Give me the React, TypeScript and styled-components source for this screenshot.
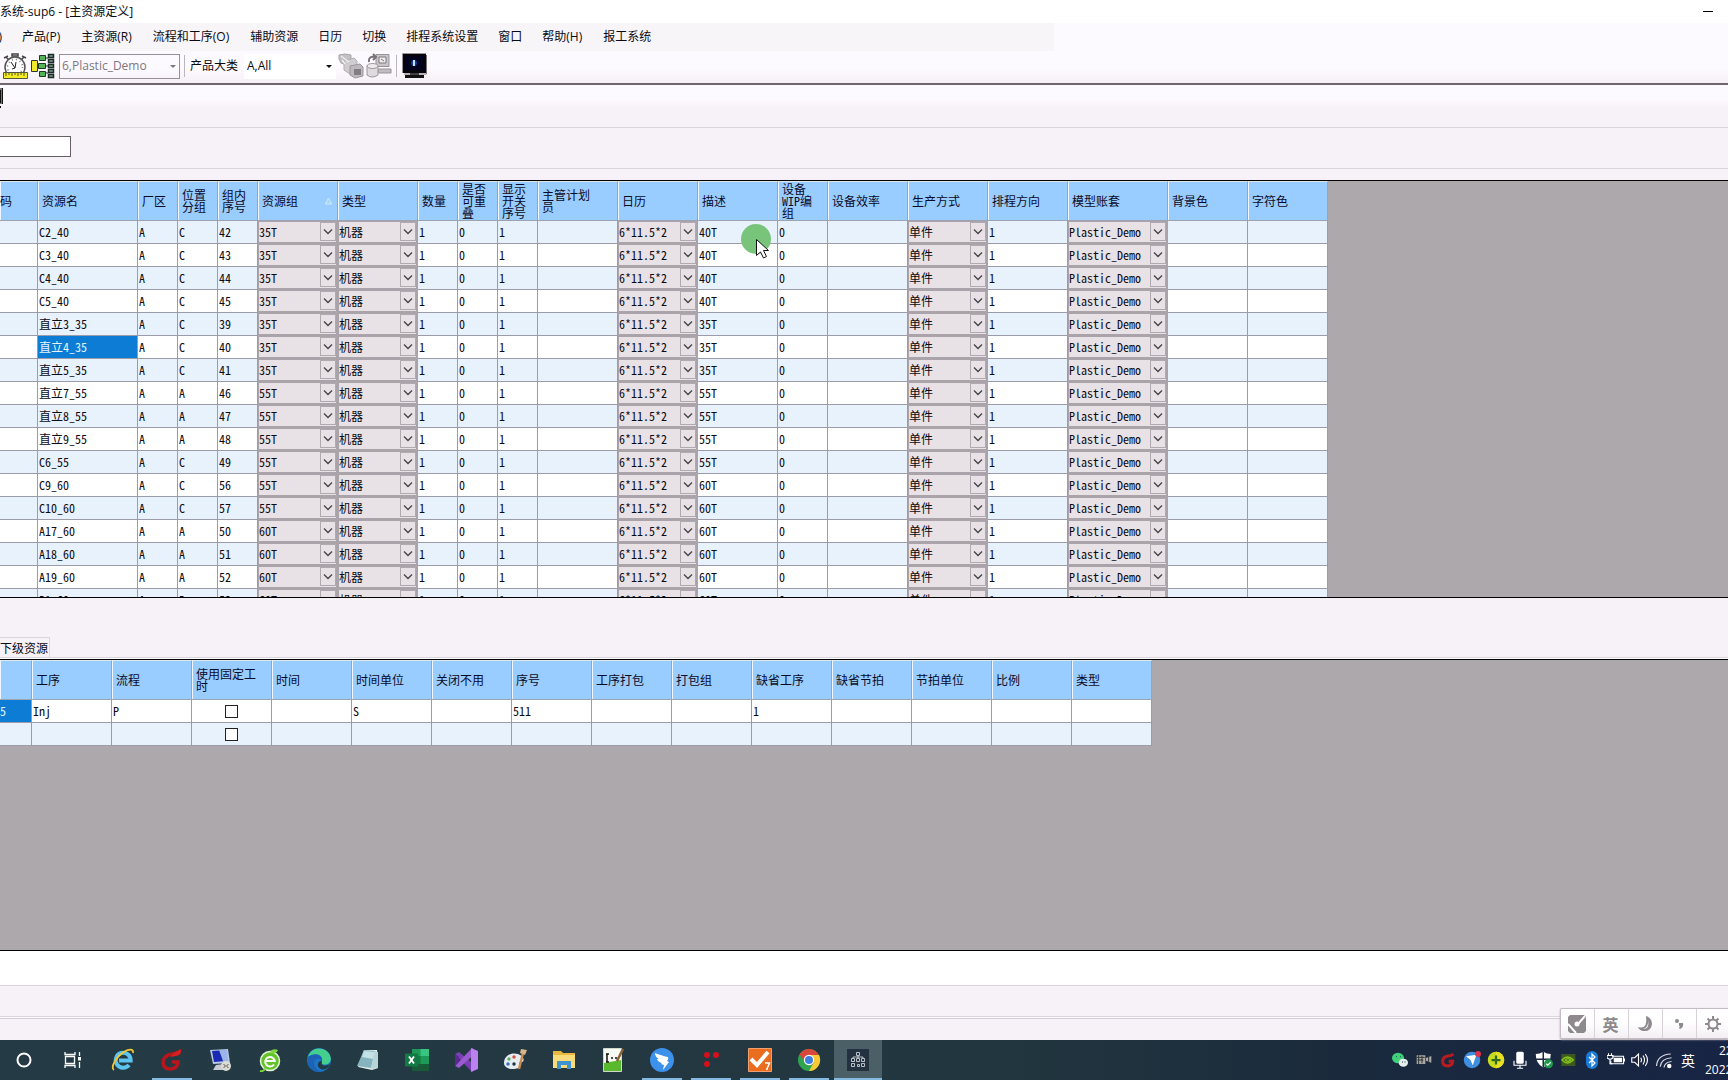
import React from "react";
import styled, { createGlobalStyle, css } from "styled-components";

const GRID_FONT = `"Noto Sans Mono CJK SC", "Noto Sans CJK SC", monospace`;
const UI_FONT = `"Open Sans", "Noto Sans CJK SC", sans-serif`;

const Global = createGlobalStyle`
  * { box-sizing: border-box; }
  body { margin: 0; background: #f7f1f8; }
  button, input, select { font: inherit; color: inherit; margin: 0; padding: 0; border: 0; border-radius: 0; background: none; }
`;

/* ---------- frame ---------- */

const Page = styled.div`
  position: relative;
  display: flex;
  flex-direction: column;
  height: 100vh;
  overflow: hidden;
  background: #f7f1f8;
  color: #0a0a12;
  font: 12px/16px ${UI_FONT};
`;

const TitleBar = styled.header`
  display: flex;
  align-items: center;
  justify-content: space-between;
  height: 23px;
  padding-right: 12px;
  background: #fff;
`;

const Title = styled.h1`
  margin: 0;
  font: inherit;
  white-space: nowrap;
`;

const Minimize = styled.button`
  display: flex;
  align-items: center;
  justify-content: center;
  width: 16px;
  height: 16px;
  &::before {
    content: "";
    width: 10px;
    height: 1px;
    background: #000;
  }
`;

const MenuRow = styled.div`
  background: #fdfaff;
`;

const MenuBar = styled.nav`
  display: flex;
  align-items: center;
  gap: 20px;
  width: 61%;
  height: 28px;
  background: #f8f5f9;
`;

const MenuItem = styled.button<{ $clipped?: boolean; $shortcut?: boolean }>`
  display: flex;
  justify-content: flex-end;
  flex: none;
  padding-right: ${(p) => (p.$shortcut ? 1 : 0)}px;
  white-space: nowrap;
  ${(p) => p.$clipped && css`width: 2px; overflow: hidden;`}
`;

const ToolBar = styled.div`
  display: flex;
  align-items: center;
  height: 34px;
  padding: 0 0 2px 2px;
  background: linear-gradient(#fdfaff 55%, #f5f0f5);
  border-bottom: 2px solid #70676f;
`;

const ToolButton = styled.button`
  display: flex;
  width: 26px;
  height: 26px;
  margin-right: 2px;
`;

const Divider = styled.span`
  width: 1px;
  height: 22px;
  margin: 0 5px 0 2px;
  background: #bcb6bc;
`;

const PickerBox = styled.span<{ $disabled?: boolean }>`
  position: relative;
  display: flex;
  width: ${(p) => (p.$disabled ? 121 : 92)}px;
  height: 25px;
  margin: 0 2px 0 ${(p) => (p.$disabled ? 1 : 6)}px;
  background: ${(p) => (p.$disabled ? "transparent" : "#fff")};
  border: 1px solid ${(p) => (p.$disabled ? "#97909a" : "#fff")};
  color: ${(p) => (p.$disabled ? "#7d7680" : "#0a0a12")};
  &::after {
    content: "";
    position: absolute;
    right: 3px;
    top: 10px;
    border: 3px solid transparent;
    border-top-color: currentColor;
    pointer-events: none;
  }
`;

const Picker = styled.select`
  flex: 1;
  appearance: none;
  padding-left: 2px;
  opacity: 1;
`;

const SubToolBar = styled.div`
  display: flex;
  align-items: flex-start;
  height: 43px;
  padding-top: 3px;
  background: linear-gradient(#fdfaff 35%, #f7f1f8 55%);
  border-bottom: 1px solid #dcd5dc;
`;

const FilterRow = styled.div`
  display: flex;
  align-items: center;
  height: 41px;
  padding-bottom: 3px;
  border-bottom: 1px solid #dcd5dc;
`;

const FilterInput = styled.input`
  width: 71px;
  height: 21px;
  background: #fff;
  border: 1px solid #666066;
  border-left: 0;
`;

const Spacer = styled.div<{ $h: number }>`
  flex: none;
  height: ${(p) => p.$h}px;
`;

/* ---------- data grids ---------- */

const UpperPane = styled.section`
  flex: none;
  height: 418px;
  overflow: hidden;
  background: #aca8ac;
  border-top: 1px solid #000;
  border-bottom: 1px solid #000;
`;

const LowerPane = styled.section`
  flex: 1;
  min-height: 0;
  overflow: hidden;
  background: #aca8ac;
  border-top: 1px solid #000;
  border-bottom: 1px solid #000;
`;

const Table = styled.table`
  table-layout: fixed;
  width: 0;
  border-collapse: separate;
  border-spacing: 0;
  font: 12px/12px ${GRID_FONT};
`;

const Col = styled.col<{ $w: number }>`
  width: ${(p) => p.$w}px;
`;

const Th = styled.th<{ $flush?: boolean }>`
  height: 40px;
  padding: 0 4px 1px ${(p) => (p.$flush ? 0 : 4)}px;
  overflow: hidden;
  background: #99ccff;
  border-top: 1px solid #dfe6ee;
  border-right: 1px solid #8fa6c0;
  border-bottom: 1px solid #9aa4b4;
  box-shadow: inset 1px 0 #f0f7ff;
  color: #0a0a2a;
  font-weight: normal;
  text-align: left;
  vertical-align: middle;
  white-space: pre;
`;

const HeadLabel = styled.span`
  display: flex;
  align-items: center;
  justify-content: space-between;
  height: 37px;
`;

const Row = styled.tr<{ $alt?: boolean }>`
  background: ${(p) => (p.$alt ? "#e8f2fd" : "#fff")};
`;

const Td = styled.td<{ $selected?: boolean; $center?: boolean; $head?: boolean }>`
  height: 23px;
  padding: 0 0 1px ${(p) => (p.$head ? 0 : 1)}px;
  overflow: hidden;
  border-right: 1px solid #9c9ca8;
  border-bottom: 1px solid #9c9ca8;
  white-space: nowrap;
  ${(p) => p.$selected && css`background: #0c7cd5; color: #e6f6ff;`}
  ${(p) => p.$center && css`padding: 0 0 1px; text-align: center;`}
`;

const ComboTd = styled.td`
  height: 23px;
  padding: 0;
  background: #e8e1e6;
  border: 1px solid #aaa4aa;
  border-width: 1px 2px 2px 1px;
`;

const Combo = styled.span`
  position: relative;
  display: flex;
  height: 20px;
`;

const ComboSelect = styled.select`
  flex: 1;
  min-width: 0;
  height: 19px;
  appearance: none;
  line-height: 18px;
`;

const ComboArrow = styled.span`
  position: absolute;
  top: 0;
  right: 0;
  display: flex;
  align-items: center;
  justify-content: center;
  width: 16px;
  height: 19px;
  border: 1px solid #b0aab0;
  background: #e8e1e6;
  pointer-events: none;
`;

const Check = styled.input`
  appearance: none;
  display: inline-block;
  width: 13px;
  height: 13px;
  background: #fff;
  border: 1px solid #222;
  vertical-align: middle;
`;

const TabStrip = styled.div`
  display: flex;
  align-items: flex-end;
  height: 61px;
  padding-bottom: 1px;
  border-bottom: 1px solid #fff;
  box-shadow: inset 0 -1px #dcd5dc;
`;

const Tab = styled.button`
  width: 50px;
  height: 20px;
  border: 1px solid #dcd5dc;
  border-width: 1px 1px 0 0;
  font: 12px/18px ${GRID_FONT};
  text-align: left;
  white-space: nowrap;
`;

/* ---------- bottom of the window ---------- */

const MessageStrip = styled.div`
  height: 35px;
  background: #fff;
  border-bottom: 1px solid #dcd5dc;
`;

const StatusStrip = styled.div`
  height: 33px;
  border-bottom: 1px solid #d3cbd5;
  box-shadow: inset 0 -1px #fdfaff, inset 0 -2px #dcd5dc;
`;

const ImeBar = styled.div`
  position: absolute;
  right: 0;
  bottom: 41px;
  display: flex;
  width: 168px;
  height: 31px;
  overflow: hidden;
  background: linear-gradient(#fff 45%, #f3eff3);
  border: 1px solid #c4bcc4;
  border-right: 0;
  border-radius: 2px 0 0 2px;
  box-shadow: 0 1px 2px #a9a2a9;
`;

const ImeButton = styled.button`
  display: flex;
  flex: none;
  align-items: center;
  justify-content: center;
  width: 34px;
  padding-right: 2px;
  border-right: 1px solid #d8d2d8;
  color: #8d898d;
  font: bold 16px/20px "Noto Sans CJK SC", sans-serif;
`;

const TaskBar = styled.footer`
  display: flex;
  flex: none;
  justify-content: space-between;
  height: 40px;
  overflow: hidden;
  background: linear-gradient(90deg, #243b45 0%, #22363f 58%, #1a2a3c 78%, #182444 100%);
  color: #fff;
`;

const Apps = styled.div`
  display: flex;
  gap: 1px;
  padding-left: 1px;
`;

const AppButton = styled.button<{ $state?: "open" | "active" }>`
  display: flex;
  align-items: center;
  justify-content: center;
  width: 48px;
  height: 40px;
  background: ${(p) =>
    p.$state === "active"
      ? "linear-gradient(#84b9e2, #84b9e2) bottom / 48px 2px no-repeat, #4b5f67"
      : p.$state === "open"
      ? "linear-gradient(#84b9e2, #84b9e2) bottom / 40px 2px no-repeat"
      : "none"};
`;

const Tray = styled.div`
  display: flex;
  align-items: center;
`;

const TrayButton = styled.button`
  display: flex;
  align-items: center;
  justify-content: center;
  width: 24px;
  height: 24px;
  font: 14px/20px "Noto Sans CJK SC", sans-serif;
`;

const Clock = styled.time`
  display: flex;
  flex-direction: column;
  width: 28px;
  padding-left: 5px;
  overflow: hidden;
  font: 12px/19px ${UI_FONT};
  white-space: nowrap;
`;

const ClockLine = styled.span<{ $indent?: boolean }>`
  padding-left: ${(p) => (p.$indent ? 14 : 0)}px;
`;

const Pointer = styled.svg`
  position: absolute;
  left: 741px;
  top: 224px;
  pointer-events: none;
`;

/* ---------- data ---------- */

type Kind = "text" | "combo";
const columns: { label: string; w: number; kind?: Kind; sorted?: boolean }[] = [
  { label: "码", w: 38 },
  { label: "资源名", w: 100 },
  { label: "厂区", w: 40 },
  { label: "位置\n分组", w: 40 },
  { label: "组内\n序号", w: 40 },
  { label: "资源组", w: 80, kind: "combo", sorted: true },
  { label: "类型", w: 80, kind: "combo" },
  { label: "数量", w: 40 },
  { label: "是否\n可重\n叠", w: 40 },
  { label: "显示\n开关\n序号", w: 40 },
  { label: "主管计划\n员", w: 80 },
  { label: "日历", w: 80, kind: "combo" },
  { label: "描述", w: 80 },
  { label: "设备\nWIP编\n组", w: 50 },
  { label: "设备效率", w: 80 },
  { label: "生产方式", w: 80, kind: "combo" },
  { label: "排程方向", w: 80 },
  { label: "模型账套", w: 100, kind: "combo" },
  { label: "背景色", w: 80 },
  { label: "字符色", w: 80 },
];

const resources: [string, string, string, string, string][] = [
  ["C2_40", "C", "42", "35T", "40T"],
  ["C3_40", "C", "43", "35T", "40T"],
  ["C4_40", "C", "44", "35T", "40T"],
  ["C5_40", "C", "45", "35T", "40T"],
  ["直立3_35", "C", "39", "35T", "35T"],
  ["直立4_35", "C", "40", "35T", "35T"],
  ["直立5_35", "C", "41", "35T", "35T"],
  ["直立7_55", "A", "46", "55T", "55T"],
  ["直立8_55", "A", "47", "55T", "55T"],
  ["直立9_55", "A", "48", "55T", "55T"],
  ["C6_55", "C", "49", "55T", "55T"],
  ["C9_60", "C", "56", "55T", "60T"],
  ["C10_60", "C", "57", "55T", "60T"],
  ["A17_60", "A", "50", "60T", "60T"],
  ["A18_60", "A", "51", "60T", "60T"],
  ["A19_60", "A", "52", "60T", "60T"],
  ["B1_60", "B", "53", "60T", "60T"],
];

const toCells = ([name, group, seq, family, note]: (typeof resources)[number]) => [
  "", name, "A", group, seq, family, "机器", "1", "0", "1", "", "6*11.5*2", note, "0", "", "单件", "1", "Plastic_Demo", "", "",
];

const stepColumns = ["", "工序", "流程", "使用固定工\n时", "时间", "时间单位", "关闭不用", "序号", "工序打包", "打包组", "缺省工序", "缺省节拍", "节拍单位", "比例", "类型"];
const stepRows = [
  ["5", "Inj", "P", "", "", "S", "", "511", "", "", "1", "", "", "", ""],
  Array(15).fill("") as string[],
];

const menus = ["产品(P)", "主资源(R)", "流程和工序(O)", "辅助资源", "日历", "切换", "排程系统设置", "窗口", "帮助(H)", "报工系统"];

/* ---------- drawings ---------- */

const Icon = ({ s = 24, children }: { s?: number; children: React.ReactNode }) => (
  <svg width={s} height={s} viewBox="0 0 24 24" fill="none" aria-hidden="true">{children}</svg>
);

const Stopwatch = () => (
  <svg width="26" height="26" viewBox="0 0 26 26" fill="none" aria-hidden="true">
    <path d="M10 1h6v2h-6zM2 5l4-2M24 5l-4-2M4 4l3 3M22 4l-3 3" stroke="#444" strokeWidth="1.500" />
    <circle cx="13" cy="14" r="10" fill="#fff" stroke="#555" strokeWidth="1.500" />
    <circle cx="13" cy="14" r="7.500" stroke="#777" strokeWidth="1.500" strokeDasharray="1 3" />
    <path d="M9 9l4 6 1-6M13 15l-3 1" stroke="#222" />
    <path d="M1.500 19.500h24v6h-24z" fill="#f3ee22" stroke="#555540" />
    <path d="M4 20v3M7 20v2M10 20v3M13 20v2M16 20v3M19 20v2M22 20v3" stroke="#55551a" />
  </svg>
);

const TreeIcon = () => (
  <svg width="26" height="26" viewBox="0 0 26 26" fill="none" aria-hidden="true">
    <path d="M7 13h3M15 5h3M15 13h3M15 20h3" stroke="#222" />
    <path d="M1.500 7.500h6v11h-6z" fill="#f1e92c" stroke="#333" />
    <path d="M9.500 2.500h6v5h-6zM8.500 10.500h7v5h-7zM9.500 18.500h6v5h-6z" fill="#54b258" stroke="#1d3a20" />
    <path d="M18.500 1.500h5v3h-5zM18.500 6.500h5v3h-5zM18.500 11.500h5v3h-5zM18.500 16.500h5v3h-5zM18.500 21.500h5v3h-5z" fill="#7f9e88" stroke="#1c2a28" strokeWidth="1.500" />
  </svg>
);

const GrayDatabases = () => (
  <svg width="26" height="26" viewBox="0 0 26 26" fill="none" aria-hidden="true">
    <path d="M1 2q6-2 12 0v8q-6 3-10 0L1 6z" fill="#c4c0c4" stroke="#aaa5aa" />
    <path d="M6 8l10-3 3 3v11l-7 2-6-4z" fill="#d0ccd0" stroke="#b1adb1" />
    <path d="M12 13l10-2 3 3v9l-8 2-5-3z" fill="#bcb8bc" stroke="#9c979c" />
    <path d="M16 16h7v6h-7z" fill="#827d82" />
    <path d="M3 3l8 6M4 7l3 4" stroke="#eee" strokeWidth="1.500" />
  </svg>
);

const GrayRefresh = () => (
  <svg width="26" height="26" viewBox="0 0 26 26" fill="none" aria-hidden="true">
    <path d="M10 1.500h13v12H10z" fill="#c9c5c9" stroke="#989398" />
    <path d="M13 4h7v6h-7z" fill="#eee" stroke="#7d787d" />
    <path d="M11 16h14v4H13z" fill="#c1bdc1" stroke="#989398" />
    <path d="M1 13v9q5 4 11 0v-9z" fill="#dedade" stroke="#999499" />
    <ellipse cx="6.500" cy="13" rx="5.500" ry="2.500" fill="#eeeaee" stroke="#999499" />
    <path d="M3 9q-1-6 6-5M7 1l3 3-3 3" stroke="#777277" strokeWidth="2" />
    <path d="M15 6l3 2" stroke="#777277" />
  </svg>
);

const MonitorIcon = () => (
  <svg width="26" height="26" viewBox="0 0 26 26" fill="none" aria-hidden="true">
    <path d="M1 1h23v19H1z" fill="#06060c" />
    <path d="M.500 20V.500H24" stroke="#9a949a" />
    <path d="M3 3h19v14H3z" fill="#02041e" />
    <circle cx="12" cy="10" r="3" fill="#123c9c" />
    <path d="M12 7v6" stroke="#bfe4ff" strokeWidth="2" />
    <path d="M8 20h9v2H8zM3 22h19v3H3z" fill="#111" />
    <path d="M24.500 2v19H2" stroke="#77717a" />
  </svg>
);

const taskIcons: { name: string; state?: "open" | "active"; art: React.ReactNode }[] = [
  { name: "Search", art: <Icon><circle cx="11" cy="12" r="6.500" stroke="#fff" strokeWidth="2" /></Icon> },
  {
    name: "Task view",
    art: <Icon><path d="M3 4v2.500h10V4M3 20v-2.500h10V20M3.500 8.500h9v7h-9zM17.500 4v4M17.500 14v6" stroke="#fff" strokeWidth="1.300" /><path d="M16 9h3v3.500h-3z" fill="#fff" /></Icon>,
  },
  {
    name: "Internet Explorer",
    art: <Icon><path d="M18 17a7.500 7.500 0 1 1 1.700-4.500H8" stroke="#5cc4ee" strokeWidth="4" /><path d="M3 22C-1 20 5 9 12 4.500 17 1 23 0 22 5" stroke="#f0c832" strokeWidth="1.800" /></Icon>,
  },
  {
    name: "Recorder", state: "open",
    art: <Icon><path d="M18 4q-2 2-6 2-8 1-9 8 0 7 8 7 7-1 7-7h-6" stroke="#b8161c" strokeWidth="3.500" /><path d="M21 1q1 6-5 7l-6 1q4-5 11-8z" fill="#d81e20" /></Icon>,
  },
  {
    name: "Remote Desktop",
    art: <Icon><path d="M1 2l18-1 2 14-17 1z" fill="#b7c9e4" /><path d="M3 3l13-1 1 11-12 1z" fill="#1b2ab4" /><path d="M10 2l8 0 1 11-5 0z" fill="#9bb4ea" /><path d="M7 17l8-1 1 6-12 0z" fill="#c9ccd2" /><circle cx="17" cy="18" r="5" fill="#dcdcd4" /><path d="M14.500 16l2 2-2 2M19.500 16l-2 2 2 2" stroke="#555" /></Icon>,
  },
  {
    name: "Green browser",
    art: <Icon><circle cx="12" cy="13" r="9.500" fill="#63c32a" stroke="#e6f7d8" strokeWidth="1.500" /><path d="M16 16.500a4.800 4.800 0 1 1 .8-3.500H8" stroke="#fff" strokeWidth="2" /><path d="M12 3q4-3 8-1-2 4-6 3" fill="#7ed53c" /><path d="M2 23q3 1 6-3" stroke="#7ed53c" strokeWidth="2" /></Icon>,
  },
  {
    name: "Edge",
    art: <Icon><circle cx="12" cy="12" r="12" fill="#1b76c8" /><path d="M1 9C3 1 12-2 19 2.500c7 5 6 14-1 14-4 0-4-2-3-4C16 6 7 4 1 9z" fill="#45cf8e" /><path d="M1 9c6-5 15-2 14 3.500C13 9 7 10 7 15c0 5 5 9 9 8C7 26-1 19 1 9z" fill="#1d62b3" /><path d="M15 12.500c-1 3 0 5 3 5 2 0 4-1 5-2-1 4-4 6-8 6-5-1-6-8 0-9z" fill="#233a44" /></Icon>,
  },
  {
    name: "Notes",
    art: <Icon><path d="M8 2h13l1 18-6 2-14-3z" fill="#e4eeee" /><path d="M8 2l11 1-4 17L1 18z" fill="#86b4be" /><path d="M8 3l11 1-2 7L6 9z" fill="#c4e2e6" /><path d="M19 3l3 1v16l-7 1z" fill="#b8d4d8" /></Icon>,
  },
  {
    name: "Excel",
    art: <Icon><path d="M7 1h17v22H7z" fill="#1e9a58" /><path d="M15.500 1H24v7h-8.500z" fill="#38c481" /><path d="M7 8h8.500v8H7z" fill="#107c41" /><path d="M7 16h17v7H7z" fill="#185c37" /><path d="M0 5.500h13v13H0z" fill="#137a44" /><path d="M4 8.500l5 7M9 8.500l-5 7" stroke="#fff" strokeWidth="1.800" /></Icon>,
  },
  {
    name: "Visual Studio",
    art: <Icon><path d="M1 6l4-2 18 15-5 5z" fill="#7a3fb4" /><path d="M1 18l4 2L23 4l-5-4z" fill="#9a5bd0" /><path d="M1 6v12l4-4V9z" fill="#5a2a8e" /><path d="M17 0l7 3v18l-7 3z" fill="#b982ee" /></Icon>,
  },
  {
    name: "Paint",
    art: <Icon><path d="M1 15C1 7 9 4 15 6c6 2 7 7 4 8-3 0-4 2-2 4 0 4-16 5-16-3z" fill="#e4ecf2" /><circle cx="6" cy="11" r="1.700" fill="#5cae5c" /><circle cx="11" cy="9" r="1.700" fill="#d0503c" /><circle cx="5" cy="16" r="1.700" fill="#3c6cc4" /><circle cx="11" cy="16" r="1.700" fill="#222e3a" /><path d="M20 5L16 21" stroke="#c98b4b" strokeWidth="2.500" /><path d="M17 5l1-4 6 1-2 5z" fill="#d9b48a" /></Icon>,
  },
  {
    name: "File Explorer",
    art: <Icon><path d="M1 3h8l2 2h12v15H1z" fill="#e8b93c" /><path d="M1 7h22v13H1z" fill="#f8dc7c" /><path d="M5 21v-8h14v8h-4v-4H9v4z" fill="#3e94d0" /></Icon>,
  },
  {
    name: "Editor",
    art: <Icon><path d="M2.500.500h18v23h-18z" fill="#f8faf4" stroke="#d0d8cc" /><path d="M3 15l17-3v11H3z" fill="#5ab82c" /><path d="M6 6v8M5 6h3M5 14h3M10 10h2M14 10h2" stroke="#111" strokeWidth="1.500" /><path d="M22 1l-6 12" stroke="#8a6232" strokeWidth="2.500" /></Icon>,
  },
  {
    name: "DingTalk", state: "open",
    art: <Icon><circle cx="12" cy="12" r="12" fill="#3c92ea" /><path d="M5 5q8 3 13 4 1 2-1 4l2 1-6 8 1-5-3-1 1-1q-4-1-5-4l2 0q-4-2-4-6z" fill="#fff" /></Icon>,
  },
  {
    name: "Red dots", state: "open",
    art: <Icon><circle cx="8" cy="7" r="3" fill="#d4101c" /><circle cx="17" cy="7" r="3" fill="#d4101c" /><circle cx="8" cy="16" r="3" fill="#d4101c" /></Icon>,
  },
  {
    name: "Checker", state: "open",
    art: <Icon><path d="M.5.5h23v23H.5z" fill="#ea6c1e" stroke="#f0a070" /><path d="M3 11l6 6L20 4" stroke="#fff" strokeWidth="4" /><path d="M17 15h4.500l-3 7" stroke="#fff" strokeWidth="1.500" /></Icon>,
  },
  {
    name: "Chrome", state: "open",
    art: <Icon><circle cx="12" cy="12" r="11" fill="#2fa34e" /><path d="M2.500 6.500a11 11 0 0 1 19 0L22 8H12L8 14z" fill="#d9473a" /><path d="M12 7h10a11 11 0 0 1-10 16l5-9z" fill="#f7c933" /><circle cx="12" cy="12" r="5.200" fill="#fff" /><circle cx="12" cy="12" r="4" fill="#3f7fe0" /></Icon>,
  },
  {
    name: "Scheduler", state: "active",
    art: <Icon><path d="M1 1h22v22H1z" fill="#233140" /><path d="M10.500 4.500h3v3h-3zM5.500 10.500h3v3h-3zM10.500 10.500h3v3h-3zM15.500 10.500h3v3h-3zM5.500 15.500h3v3h-3zM11.500 16.500h2v2h-2zM15.500 15.500h3v3h-3z" stroke="#c8d0d4" strokeWidth=".9" /><path d="M12 8v2M7 10V9h10v1" stroke="#c8d0d4" strokeWidth=".9" /></Icon>,
  },
];

const trayIcons: { name: string; art: React.ReactNode }[] = [
  { name: "WeChat", art: <Icon s={16}><ellipse cx="9" cy="9" rx="9" ry="8" fill="#3fd07a" /><ellipse cx="17" cy="16" rx="7" ry="6" fill="#e8f0ec" /><path d="M6 7h1M12 7h1M15 15h1M19 15h1" stroke="#234" strokeWidth="2" /></Icon> },
  { name: "Camera", art: <Icon s={16}><path d="M1 5h13v13H1zM15 9l8-3v10l-8-3z" fill="#a8a8a8" /><path d="M1 8h12M2 12h9M4 5v13M9 6v11M19 7v9" stroke="#333" strokeWidth="1.500" /></Icon> },
  { name: "Recorder", art: <Icon s={16}><path d="M20 3q-3 3-8 3-8 1-8 8 0 7 8 7 7-1 7-7h-6" stroke="#b81c20" strokeWidth="4.500" /></Icon> },
  { name: "Navigator", art: <Icon s={18}><circle cx="12" cy="12" r="11" fill="#3f8fe0" /><path d="M4 7l14-2-5 14-3-7z" fill="#fff" /><circle cx="20" cy="4" r="4" fill="#e0344c" /></Icon> },
  { name: "Guard", art: <Icon s={18}><circle cx="12" cy="12" r="11" fill="#c8dc1e" /><path d="M12 1a11 11 0 0 1 0 22z" fill="#e8e020" /><path d="M12 6v12M6 12h12" stroke="#2c6a20" strokeWidth="3" /></Icon> },
  { name: "Microphone", art: <Icon s={18}><rect x="7" y="1" width="10" height="16" rx="2" fill="#fff" /><path d="M4 13v6h16v-6M12 19v4M8 23h8" stroke="#fff" strokeWidth="1.500" /></Icon> },
  { name: "Security", art: <Icon s={18}><path d="M11 1q5 3 10 3 0 13-10 18Q1 17 1 4 6 4 11 1z" fill="#fff" /><path d="M11 1v21M1 11h20" stroke="#1b2a3e" strokeWidth="2" /><circle cx="18" cy="17" r="6" fill="#1d9a50" /><path d="M15 17l2 2 4-4" stroke="#fff" strokeWidth="1.500" /></Icon> },
  { name: "NVIDIA", art: <Icon s={16}><path d="M2 3h21v18H2z" fill="#3c5a20" /><path d="M3 12q8-9 17 0-9 9-17 0z" stroke="#86c41c" strokeWidth="2" /><path d="M8 12q4-4 8 0-4 4-8 0z" stroke="#86c41c" strokeWidth="2" /></Icon> },
  { name: "Bluetooth", art: <Icon s={18}><rect x="4" y="0" width="16" height="24" rx="8" fill="#1a7ad8" /><path d="M8 8l8 8-4 4V4l4 4-8 8" stroke="#fff" strokeWidth="1.600" /></Icon> },
  { name: "Battery", art: <Icon s={18}><path d="M7 7h15v10H5v-4" stroke="#fff" strokeWidth="1.600" /><path d="M9 9h11v6H9z" fill="#fff" /><path d="M22 10h2v4h-2z" fill="#fff" /><path d="M2 3v3M6 3v3M0 6h8v3q-4 4-8 0zM4 11v6h3" stroke="#fff" strokeWidth="1.500" /></Icon> },
  { name: "Volume", art: <Icon s={18}><path d="M1 9h4l5-5v16l-5-5H1z" stroke="#fff" strokeWidth="1.500" /><path d="M13 9q2 3 0 6M16 6q4 6 0 12M19 4q6 8 0 16" stroke="#fff" strokeWidth="1.500" /></Icon> },
  { name: "Network", art: <Icon s={18}><path d="M2 20Q3 5 21 4M7 21Q8 10 22 9M12 22q1-7 10-8" stroke="#d8dce4" strokeWidth="1.600" /><circle cx="19" cy="20" r="3" fill="#fff" /></Icon> },
];

/* ---------- parts ---------- */

const ComboCell = ({ value, label }: { value: string; label: string }) => (
  <ComboTd>
    <Combo>
      <ComboSelect aria-label={label} defaultValue={value}>
        <option>{value}</option>
      </ComboSelect>
      <ComboArrow>
        <svg width="10" height="6" viewBox="0 0 10 6" fill="none" aria-hidden="true">
          <path d="M1 .5l4 4 4-4" stroke="#444" strokeWidth="1.300" />
        </svg>
      </ComboArrow>
    </Combo>
  </ComboTd>
);

const ResourceTable = () => (
  <Table>
    <colgroup>{columns.map((c) => <Col key={c.label} $w={c.w} />)}</colgroup>
    <thead>
      <tr>
        {columns.map((c, i) => (
          <Th key={c.label} scope="col" $flush={i === 0}>
            <HeadLabel>
              {c.label}
              {c.sorted && (
                <svg width="9" height="8" viewBox="0 0 9 8" fill="none" aria-hidden="true">
                  <path d="M1.500 7L4.500 1l3 6z" fill="#a4d4f4" stroke="#d0ecf8" />
                </svg>
              )}
            </HeadLabel>
          </Th>
        ))}
      </tr>
    </thead>
    <tbody>
      {resources.map((r, ri) => (
        <Row key={r[0]} $alt={ri % 2 === 0}>
          {toCells(r).map((v, ci) =>
            columns[ci].kind === "combo" ? (
              <ComboCell key={ci} value={v} label={columns[ci].label} />
            ) : (
              <Td key={ci} $selected={ri === 5 && ci === 1}>{v}</Td>
            )
          )}
        </Row>
      ))}
    </tbody>
  </Table>
);

const StepTable = () => (
  <Table>
    <colgroup>{stepColumns.map((c, i) => <Col key={c} $w={i === 0 ? 32 : 80} />)}</colgroup>
    <thead>
      <tr>{stepColumns.map((c, i) => <Th key={c} scope="col" $flush={i === 0}><HeadLabel>{c}</HeadLabel></Th>)}</tr>
    </thead>
    <tbody>
      {stepRows.map((r, ri) => (
        <Row key={ri} $alt={ri % 2 === 1}>
          {r.map((v, ci) =>
            ci === 3 ? (
              <Td key={ci} $center><Check type="checkbox" aria-label="使用固定工时" /></Td>
            ) : (
              <Td key={ci} $selected={ri === 0 && ci === 0} $head={ci === 0}>{v}</Td>
            )
          )}
        </Row>
      ))}
    </tbody>
  </Table>
);

export default function App() {
  return (
    <Page>
      <Global />
      <TitleBar>
        <Title>系统-sup6 - [主资源定义]</Title>
        <Minimize aria-label="Minimize" />
      </TitleBar>
      <MenuRow>
        <MenuBar>
          <MenuItem $clipped>)</MenuItem>
          {menus.map((m) => <MenuItem key={m} $shortcut={m.endsWith(")")}>{m}</MenuItem>)}
        </MenuBar>
      </MenuRow>
      <ToolBar>
        <ToolButton aria-label="Timing"><Stopwatch /></ToolButton>
        <ToolButton aria-label="Tree"><TreeIcon /></ToolButton>
        <PickerBox $disabled>
          <Picker aria-label="Model" disabled><option>6,Plastic_Demo</option></Picker>
        </PickerBox>
        <Divider />
        <label htmlFor="family">产品大类</label>
        <PickerBox>
          <Picker id="family"><option>A,All</option></Picker>
        </PickerBox>
        <ToolButton aria-label="Databases"><GrayDatabases /></ToolButton>
        <ToolButton aria-label="Refresh"><GrayRefresh /></ToolButton>
        <Divider />
        <ToolButton aria-label="Monitor"><MonitorIcon /></ToolButton>
      </ToolBar>
      <SubToolBar>
        <svg width="3" height="20" viewBox="0 0 3 20" aria-hidden="true">
          <path d="M0 0h3v16H0z" fill="#777" />
          <path d="M0 2h1v13H0zM2 0h1v16H2zM0 18h1v2H0z" fill="#111" />
        </svg>
      </SubToolBar>
      <FilterRow><FilterInput aria-label="Filter" /></FilterRow>
      <Spacer $h={11} />
      <UpperPane><ResourceTable /></UpperPane>
      <TabStrip><Tab>下级资源</Tab></TabStrip>
      <LowerPane><StepTable /></LowerPane>
      <MessageStrip />
      <StatusStrip />
      <Spacer $h={21} />
      <TaskBar>
        <Apps>
          {taskIcons.map((t) => <AppButton key={t.name} aria-label={t.name} $state={t.state}>{t.art}</AppButton>)}
        </Apps>
        <Tray>
          {trayIcons.map((t) => <TrayButton key={t.name} aria-label={t.name}>{t.art}</TrayButton>)}
          <TrayButton>英</TrayButton>
          <Clock>
            <ClockLine $indent>22</ClockLine>
            <ClockLine>2022</ClockLine>
          </Clock>
        </Tray>
      </TaskBar>
      <ImeBar>
        <ImeButton aria-label="Input method">
          <svg width="18" height="18" viewBox="0 0 18 18" fill="none" aria-hidden="true">
            <path d="M2 0h14l2 2v14l-2 2H2l-2-2V2z" fill="#8d898d" />
            <path d="M0 9l8 9M17 1l-7 8" stroke="#fff" strokeWidth="2" />
            <circle cx="9" cy="9" r="2.500" fill="#fff" />
          </svg>
        </ImeButton>
        <ImeButton>英</ImeButton>
        <ImeButton aria-label="Night">
          <svg width="16" height="16" viewBox="0 0 16 16" aria-hidden="true"><path d="M9 0q6 2 6 8-1 8-9 7-4-1-5-4 10 3 8-11z" fill="#8d898d" /><path d="M11 4q1 7-5 9 7 0 5-9z" fill="#fff" /></svg>
        </ImeButton>
        <ImeButton aria-label="Punctuation">
          <svg width="10" height="12" viewBox="0 0 10 12" aria-hidden="true"><circle cx="3" cy="3" r="2" fill="#8d898d" /><path d="M5 5h4q1 4-3 6l-1-1 1-2H5z" fill="#8d898d" /></svg>
        </ImeButton>
        <ImeButton aria-label="Settings">
          <svg width="16" height="16" viewBox="0 0 16 16" fill="none" aria-hidden="true"><circle cx="8" cy="8" r="4.500" stroke="#8d898d" strokeWidth="2" /><path d="M8 0v3M8 13v3M0 8h3M13 8h3M2.500 2.500l2 2M11.500 11.500l2 2M2.500 13.500l2-2M11.500 4.500l2-2" stroke="#8d898d" strokeWidth="2" /></svg>
        </ImeButton>
      </ImeBar>
      <Pointer width="32" height="40" viewBox="0 0 32 40" aria-hidden="true">
        <circle cx="15" cy="15" r="15" fill="#78c47a" />
        <path d="M15.500 15.500v16l4-3.500 3 6 3-1.500-3-6h5z" fill="#fff" stroke="#111" />
      </Pointer>
    </Page>
  );
}
